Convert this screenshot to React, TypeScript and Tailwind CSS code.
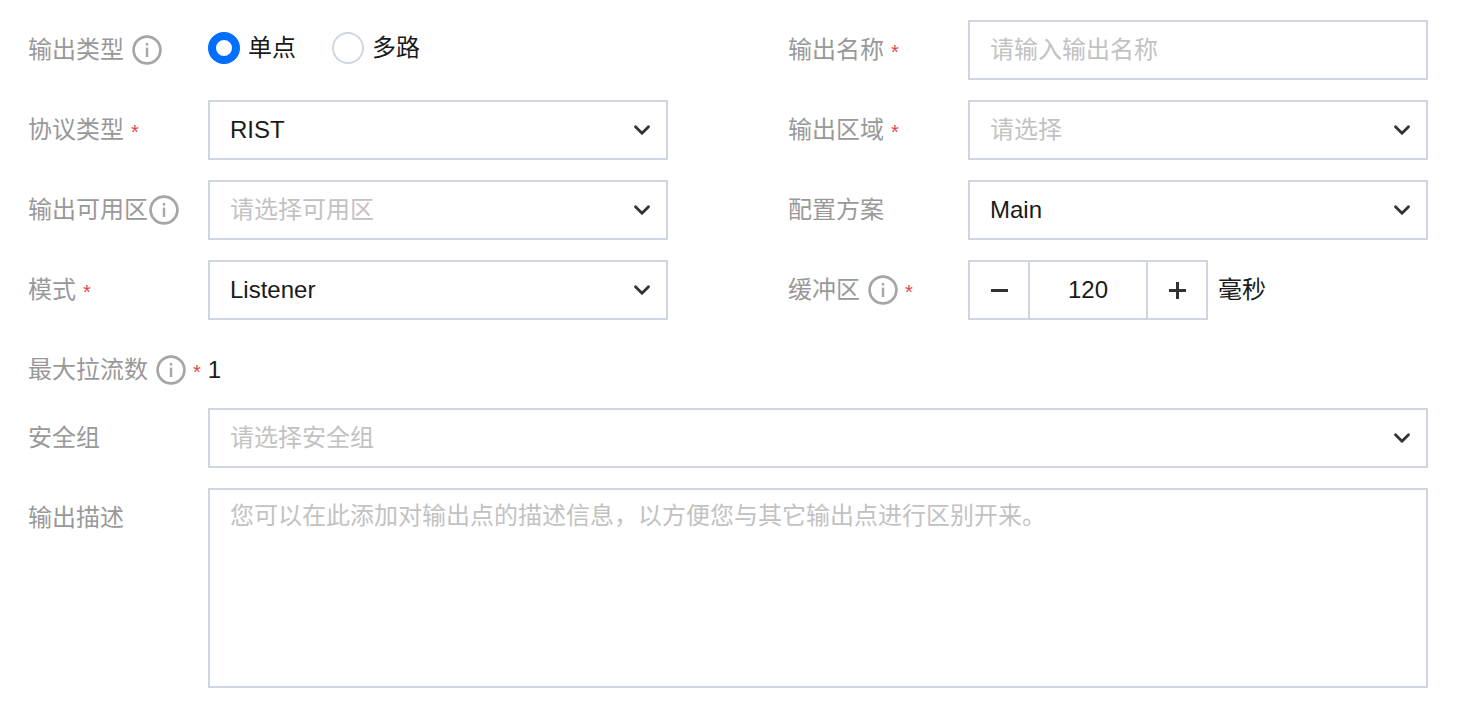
import { ChevronDown } from "lucide-react";

const font = "font-['Liberation_Sans','Noto_Sans_CJK_SC',sans-serif]";

function Info({ className = "" }: { className?: string }) {
  return (
    <svg width="30" height="30" viewBox="0 0 30 30" fill="none" className={className}>
      <circle cx="15" cy="15" r="13.4" stroke="#a6a6a6" strokeWidth="2.7" />
      <rect x="13.8" y="8" width="2.4" height="2.6" fill="#a6a6a6" />
      <rect x="13.8" y="12.6" width="2.4" height="9.4" fill="#a6a6a6" />
    </svg>
  );
}

function Star({ className = "ml-[7px]" }: { className?: string }) {
  return <span className={`${className} text-[20px] text-[#e54545] leading-none mt-[4px]`}>*</span>;
}

function Label({ text, info, star, infoGap = "ml-[8px]" }: { text: string; info?: boolean; star?: boolean; infoGap?: string }) {
  return (
    <div className="w-[180px] shrink-0 flex items-center text-[24px] text-[#999999]">
      <span>{text}</span>
      {info && <Info className={infoGap} />}
      {star && <Star />}
    </div>
  );
}

function Select({ value, placeholder, className = "w-[460px]" }: { value?: string; placeholder?: string; className?: string }) {
  return (
    <div className={`${className} h-[60px] border-2 border-[#cfd6e2] flex items-center justify-between pl-[20px] pr-[11px] text-[24px]`}>
      <span className={value ? "text-[#1a1a1a]" : "text-[#c2c2c2]"}>{value ?? placeholder}</span>
      <ChevronDown size={26} strokeWidth={2.6} className="text-[#333333] -mt-[1px]" />
    </div>
  );
}

export default function App() {
  return (
    <div className={`${font} w-[1461px] h-[715px] bg-white pl-[28px] pt-[20px] overflow-hidden`}>
      <div className="grid grid-cols-[760px_640px] gap-y-[20px]">
        <div className="flex items-center h-[60px]">
          <Label text="输出类型" info />
          <div className="flex items-center -mt-[4px] text-[24px] text-[#1a1a1a]">
            <span className="w-[32px] h-[32px] rounded-full border-[8px] border-[#006eff] bg-white" />
            <span className="ml-[8px]">单点</span>
            <span className="ml-[36px] w-[32px] h-[32px] rounded-full border-2 border-[#cfd6e2]" />
            <span className="ml-[8px]">多路</span>
          </div>
        </div>
        <div className="flex items-center h-[60px]">
          <Label text="输出名称" star />
          <div className="w-[460px] h-[60px] border-2 border-[#cfd6e2] flex items-center pl-[20px] text-[24px] text-[#c2c2c2]">
            请输入输出名称
          </div>
        </div>

        <div className="flex items-center h-[60px]">
          <Label text="协议类型" star />
          <Select value="RIST" />
        </div>
        <div className="flex items-center h-[60px]">
          <Label text="输出区域" star />
          <Select placeholder="请选择" />
        </div>

        <div className="flex items-center h-[60px]">
          <Label text="输出可用区" info infoGap="ml-[1px]" />
          <Select placeholder="请选择可用区" />
        </div>
        <div className="flex items-center h-[60px]">
          <Label text="配置方案" />
          <Select value="Main" />
        </div>

        <div className="flex items-center h-[60px]">
          <Label text="模式" star />
          <Select value="Listener" />
        </div>
        <div className="flex items-center h-[60px]">
          <Label text="缓冲区" info star />
          <div className="w-[240px] h-[60px] border-2 border-[#cfd6e2] flex items-center text-[24px] text-[#1a1a1a]">
            <div className="w-[60px] h-full flex items-center justify-center border-r-2 border-[#cfd6e2]">
              <span className="w-[17px] h-[3px] bg-[#333333]" />
            </div>
            <div className="flex-1 text-center">120</div>
            <div className="w-[60px] h-full flex items-center justify-center border-l-2 border-[#cfd6e2] relative">
              <span className="w-[17px] h-[3px] bg-[#333333]" />
              <span className="absolute w-[3px] h-[17px] bg-[#333333]" />
            </div>
          </div>
          <span className="ml-[10px] text-[24px] text-[#1a1a1a]">毫秒</span>
        </div>
      </div>

      <div className="flex items-center h-[60px] mt-[20px] text-[24px]">
        <span className="text-[#999999]">最大拉流数</span>
        <Info className="ml-[8px]" />
        <Star />
        <span className="ml-[7px] text-[#1a1a1a]">1</span>
      </div>

      <div className="flex items-center h-[60px] mt-[8px]">
        <Label text="安全组" />
        <Select placeholder="请选择安全组" className="w-[1220px]" />
      </div>

      <div className="flex items-start mt-[20px]">
        <div className="w-[180px] shrink-0 pt-[12px] text-[24px] text-[#999999]">输出描述</div>
        <div className="w-[1220px] h-[200px] border-2 border-[#cfd6e2] pl-[20px] pt-[8px] text-[24px] text-[#c2c2c2]">
          您可以在此添加对输出点的描述信息，以方便您与其它输出点进行区别开来。
        </div>
      </div>
    </div>
  );
}
